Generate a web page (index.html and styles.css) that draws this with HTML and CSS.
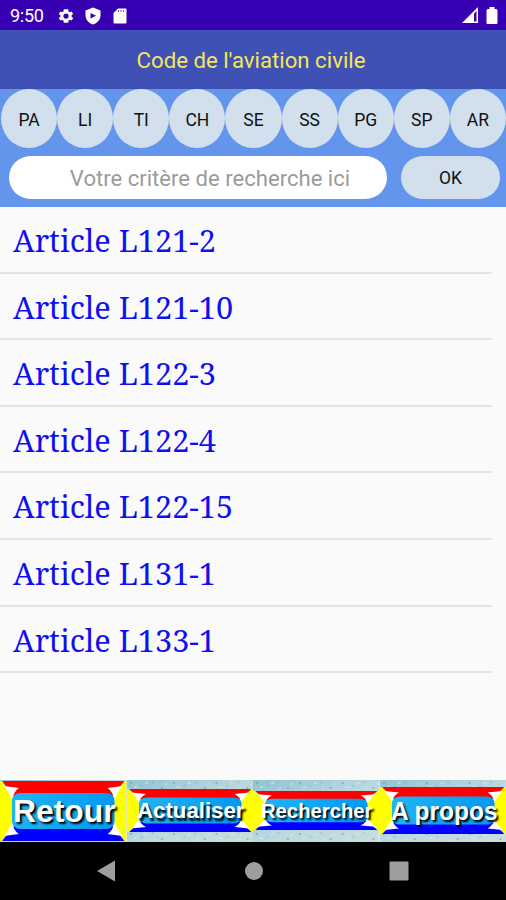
FILE: index.html
```html
<!DOCTYPE html>
<html lang="fr">
<head>
  <meta charset="UTF-8">
  <meta name="viewport" content="width=device-width, initial-scale=1.0">
  <title>Code de l'aviation civile</title>
  <link rel="stylesheet" href="styles.css">
</head>
<body>
  <!-- shared button frame and stone texture -->
  <svg class="defs" width="0" height="0">
    <defs>
      <linearGradient id="stone" x1="0" y1="0" x2="1" y2="1">
        <stop offset="0" stop-color="#91c3d3"/>
        <stop offset="0.5" stop-color="#b9d8df"/>
        <stop offset="1" stop-color="#c9dedd"/>
      </linearGradient>
      <linearGradient id="sky" x1="0" y1="0" x2="1" y2="0">
        <stop offset="0" stop-color="#20b4f4"/>
        <stop offset="1" stop-color="#0598f0"/>
      </linearGradient>
      <pattern id="specks" width="43" height="17" patternUnits="userSpaceOnUse">
        <path d="M3 3h2M14 6h1M25 2h1M34 8h2M9 12h1M20 14h2M30 12h1M40 15h1" stroke="#6c949e" stroke-width="1"/>
        <path d="M7 7h3M18 3h3M38 4h2M26 9h2M2 15h3M34 15h2" stroke="#dcebec" stroke-width="1"/>
      </pattern>
      <symbol id="frame" viewBox="0 0 127 60" preserveAspectRatio="none">
        <path d="M2 0H125L112 16V30H15V16z" fill="#f00"/>
        <path d="M2 60H125L112 44V30H15V44z" fill="#00f"/>
        <path d="M0 0H2L13 18V42L2 60H0z" fill="#ff0"/>
        <path d="M127 0H125L114 18V42L125 60H127z" fill="#ff0"/>
        <path d="M4 5L19 7Q13 11 12 20Q10 12 4 5zM4 55L19 53Q13 49 12 40Q10 48 4 55z" fill="#fff"/>
        <path d="M123 5L108 7Q114 11 115 20Q117 12 123 5zM123 55L108 53Q114 49 115 40Q117 48 123 55z" fill="#fff"/>
        <rect x="12" y="12" width="103" height="36" rx="8" fill="url(#sky)"/>
      </symbol>
    </defs>
  </svg>

  <div class="status-bar">
    <span class="clock">9:50</span>
    <svg class="icon-gear" width="18" height="18" viewBox="0 0 24 24"><path fill="#fff" fill-rule="evenodd" d="M19.4 13a7 7 0 0 0 0-2l2.1-1.6-2-3.5-2.5 1a7 7 0 0 0-1.7-1L15 3H9l-.4 2.9a7 7 0 0 0-1.7 1l-2.5-1-2 3.5L4.6 11a7 7 0 0 0 0 2l-2.2 1.6 2 3.5 2.5-1a7 7 0 0 0 1.7 1L9 21h6l.4-2.9a7 7 0 0 0 1.7-1l2.5 1 2-3.5zM12 15.5a3.5 3.5 0 1 1 0-7 3.5 3.5 0 0 1 0 7z"/></svg>
    <svg class="icon-shield" width="16" height="18" viewBox="0 0 16 18"><path fill="#fff" fill-rule="evenodd" d="M8 .5L15.5 3.5V8.5C15.5 12.8 12 16.2 8 17.5C4 16.2 .5 12.8 .5 8.5V3.5zM5.5 6V11.6L11 8.8z"/></svg>
    <svg class="icon-card" width="14" height="16" viewBox="0 0 14 16"><path fill="#fff" d="M5 .5H12.5Q13.5 .5 13.5 1.5V14.5Q13.5 15.5 12.5 15.5H1.5Q.5 15.5 .5 14.5V5z"/><path stroke="#3700b3" stroke-width=".7" d="M5.5 2v2M8 2v2M10.5 2v2"/></svg>
    <svg class="icon-signal" width="17" height="17" viewBox="0 0 17 17"><path fill="#fff" d="M16 0V16H0z"/><path fill="#3700b3" d="M12 6.5L14.5 4V14.5H12z"/></svg>
    <svg class="icon-battery" width="12" height="18" viewBox="0 0 12 18"><path fill="#fff" d="M3.5 0H8.5V2H10Q11.5 2 11.5 3.5V16Q11.5 17 10.5 17H1.5Q.5 17 .5 16V3.5Q.5 2 2 2H3.5z"/></svg>
  </div>

  <header class="title-bar">Code de l'aviation civile</header>

  <div class="search-panel">
    <div class="filters">
      <button>PA</button>
      <button>LI</button>
      <button>TI</button>
      <button>CH</button>
      <button>SE</button>
      <button>SS</button>
      <button>PG</button>
      <button>SP</button>
      <button>AR</button>
    </div>
    <form class="search">
      <input type="text" placeholder="Votre critère de recherche ici">
      <button type="button">OK</button>
    </form>
  </div>

  <ul class="articles">
    <li>Article L121-2</li>
    <li>Article L121-10</li>
    <li>Article L122-3</li>
    <li>Article L122-4</li>
    <li>Article L122-15</li>
    <li>Article L131-1</li>
    <li>Article L133-1</li>
  </ul>

  <nav class="actions">
    <svg viewBox="0 0 127 62" preserveAspectRatio="none">
      <rect width="127" height="62" fill="url(#stone)"/>
      <use href="#frame" x="0" y="1" width="127" height="60"/>
      <text x="13" y="42" font-size="31" textLength="103" lengthAdjust="spacingAndGlyphs">Retour</text>
    </svg>
    <svg viewBox="0 0 127 62" preserveAspectRatio="none">
      <rect width="127" height="62" fill="url(#stone)"/>
      <rect width="127" height="62" fill="url(#specks)"/>
      <use href="#frame" x="0" y="9" width="127" height="43"/>
      <text x="10" y="38.5" font-size="22.5" textLength="108" lengthAdjust="spacingAndGlyphs">Actualiser</text>
    </svg>
    <svg viewBox="0 0 127 62" preserveAspectRatio="none">
      <rect width="127" height="62" fill="url(#stone)"/>
      <rect width="127" height="62" fill="url(#specks)"/>
      <use href="#frame" x="0" y="11" width="127" height="39"/>
      <text x="8" y="38" font-size="21" textLength="112" lengthAdjust="spacingAndGlyphs">Rechercher</text>
    </svg>
    <svg viewBox="0 0 127 62" preserveAspectRatio="none">
      <rect width="127" height="62" fill="url(#stone)"/>
      <rect width="127" height="62" fill="url(#specks)"/>
      <use href="#frame" x="0" y="7" width="127" height="47"/>
      <text x="11" y="40" font-size="25.5" textLength="107" lengthAdjust="spacingAndGlyphs">A propos</text>
    </svg>
  </nav>

  <div class="system-nav">
    <svg width="18" height="22" viewBox="0 0 18 22"><path fill="#9e9e9e" d="M18 .5V21.5L0 11z"/></svg>
    <svg width="18" height="18" viewBox="0 0 18 18"><circle cx="9" cy="9" r="9" fill="#9e9e9e"/></svg>
    <svg width="20" height="20" viewBox="0 0 20 20"><rect x=".5" y=".5" width="19" height="19" rx="1" fill="#9e9e9e"/></svg>
  </div>
</body>
</html>
```
FILE: styles.css
```css
* {
  box-sizing: border-box;
}
body {
  margin: 0;
  height: 100vh;
  display: flex;
  flex-direction: column;
  overflow: hidden;
  background-color: #fafafa;
  font-family: Roboto, sans-serif;
}
.defs {
  position: absolute;
}
.status-bar {
  height: 30px;
  flex-shrink: 0;
  display: flex;
  align-items: center;
  padding: 1px 8px 0 10px;
  background-color: #3700b3;
  color: #fff;
}
.clock {
  width: 47px;
  font-size: 18px;
  letter-spacing: -0.3px;
}
.icon-shield {
  margin-left: 10px;
}
.icon-card {
  margin-left: 12px;
}
.icon-signal {
  margin-left: auto;
}
.icon-battery {
  margin-left: 7px;
}
.title-bar {
  height: 59px;
  flex-shrink: 0;
  background-color: #3f51b5;
  color: #f5e65a;
  font-size: 22.2px;
  line-height: 61px;
  text-align: center;
  padding-right: 4px;
}
.search-panel {
  height: 118px;
  flex-shrink: 0;
  background-color: #6495ed;
}
.filters {
  display: flex;
  padding-left: 1px;
}
button {
  border: none;
  background-color: #d2e0ee;
  color: #111;
  font-family: Roboto, sans-serif;
  font-size: 17.5px;
  padding: 0;
}
.filters button {
  flex: 1;
  height: 59px;
  margin: 0;
  padding-top: 2px;
  border-radius: 50%;
}
.search {
  display: flex;
  gap: 14px;
  padding: 8px 6px 0 9px;
}
.search input {
  flex: 1;
  min-width: 0;
  height: 43px;
  border: none;
  border-radius: 22px;
  background-color: #fff;
  padding: 0 20px 0 44px;
  font-family: Roboto, sans-serif;
  font-size: 22.1px;
  text-align: center;
}
.search input::placeholder {
  color: #9b9b9b;
}
.search button {
  width: 99px;
  height: 43px;
  border-radius: 22px;
}
.articles {
  flex: 1;
  margin: 0;
  padding: 0;
  list-style: none;
}
.articles li {
  height: 66.6px;
  width: 492px;
  padding-left: 13px;
  border-bottom: 2px solid #e4e4e4;
  color: #1010ee;
  font-family: "Noto Serif", "DejaVu Serif Condensed", "DejaVu Serif", serif;
  font-stretch: condensed;
  font-size: 30.7px;
  line-height: 66px;
  white-space: nowrap;
}
.actions {
  height: 62px;
  flex-shrink: 0;
  display: flex;
}
.actions svg {
  flex: 1;
  min-width: 0;
  height: 62px;
}
.actions text {
  font-family: "Liberation Sans", Arial, sans-serif;
  font-weight: bold;
  fill: #fff;
  text-shadow: 2px 2px 2px #000;
}
.system-nav {
  height: 58px;
  flex-shrink: 0;
  display: flex;
  align-items: center;
  justify-content: space-between;
  padding: 0 97px;
  background-color: #000;
}
.system-nav svg:nth-child(2) {
  margin-left: 3px;
}
```
